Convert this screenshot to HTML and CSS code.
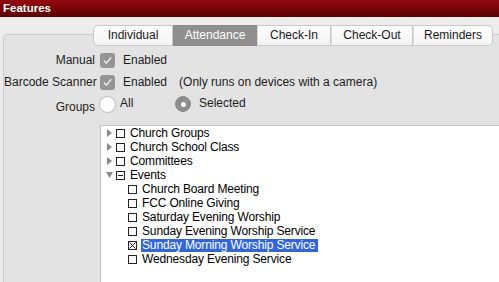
FILE: index.html
```html
<!DOCTYPE html>
<html>
<head>
<meta charset="utf-8">
<link rel="stylesheet" href="styles.css">
</head>
<body>
<div class="titlebar">Features</div>
<div class="main">
  <div class="tabs">
    <div class="tab w80">Individual</div>
    <div class="tab w84 on">Attendance</div>
    <div class="tab w74">Check-In</div>
    <div class="tab w82">Check-Out</div>
    <div class="tab w80">Reminders</div>
  </div>
  <div class="box">
    <div class="form">
      <div class="lbl">Manual</div>
      <div class="ctl">
        <span class="chk"><svg width="15" height="15" viewBox="0 0 15 15"><path d="M3.8 7.6 L6.3 10.3 L11.2 4.2" fill="none" stroke="#ececec" stroke-width="1.4"/></svg></span>Enabled
      </div>
      <div class="lbl">Barcode Scanner</div>
      <div class="ctl">
        <span class="chk"><svg width="15" height="15" viewBox="0 0 15 15"><path d="M3.8 7.6 L6.3 10.3 L11.2 4.2" fill="none" stroke="#ececec" stroke-width="1.4"/></svg></span>Enabled<span class="note">(Only runs on devices with a camera)</span>
      </div>
      <div class="lbl low">Groups</div>
      <div class="ctl radios">
        <div class="opt"><span class="radio"></span><span class="up">All</span></div>
        <div class="opt"><span class="radio on"><span class="dot"></span></span><span class="up sel">Selected</span></div>
      </div>
    </div>
    <div class="list">
      <div class="node"><svg class="tri" width="7" height="8" viewBox="0 0 7 8"><polygon points="1,0 6,4 1,8" fill="#8a8a8a"/></svg><span class="cb"></span><span class="txt">Church Groups</span></div>
      <div class="node"><svg class="tri" width="7" height="8" viewBox="0 0 7 8"><polygon points="1,0 6,4 1,8" fill="#8a8a8a"/></svg><span class="cb"></span><span class="txt">Church School Class</span></div>
      <div class="node"><svg class="tri" width="7" height="8" viewBox="0 0 7 8"><polygon points="1,0 6,4 1,8" fill="#8a8a8a"/></svg><span class="cb"></span><span class="txt">Committees</span></div>
      <div class="node"><svg class="tri" width="7" height="8" viewBox="0 0 7 8"><polygon points="0,1 7,1 3.5,7" fill="#8a8a8a"/></svg><span class="cb"><svg width="7" height="7" viewBox="0 0 7 7"><path d="M1 3.5 H6" stroke="#222" stroke-width="1"/></svg></span><span class="txt">Events</span></div>
      <div class="node child"><span class="cb"></span><span class="txt">Church Board Meeting</span></div>
      <div class="node child"><span class="cb"></span><span class="txt">FCC Online Giving</span></div>
      <div class="node child"><span class="cb"></span><span class="txt">Saturday Evening Worship</span></div>
      <div class="node child"><span class="cb"></span><span class="txt">Sunday Evening Worship Service</span></div>
      <div class="node child"><span class="cb"><svg width="7" height="7" viewBox="0 0 7 7"><path d="M0.5 0.5 L6.5 6.5 M6.5 0.5 L0.5 6.5" stroke="#222" stroke-width="1"/></svg></span><span class="txt hl">Sunday Morning Worship Service</span></div>
      <div class="node child"><span class="cb"></span><span class="txt">Wednesday Evening Service</span></div>
    </div>
  </div>
</div>
</body>
</html>
```

FILE: styles.css
```css
body {
    margin: 0;
    width: 499px;
    height: 282px;
    overflow: hidden;
    background: #ececec;
    font-family: "Liberation Sans", Arial, sans-serif;
    font-size: 12px;
    color: #1c1c1c;
}
.titlebar {
    height: 17px;
    line-height: 17px;
    padding-left: 3px;
    background: linear-gradient(#940b0f, #5a0003);
    color: #fff;
    font-weight: bold;
    font-size: 11.5px;
}
.main { padding: 8px 0 0 3px; }

/* segmented tabs */
.tabs {
    display: flex;
    margin-left: 90px;
    position: relative;
    z-index: 1;
    height: 21px;
}
.tab {
    box-sizing: border-box;
    height: 21px;
    line-height: 19px;
    text-align: center;
    background: linear-gradient(#ffffff, #f3f3f3);
    border: 1px solid #c8c8c8;
    border-left: 1px solid #dcdcdc;
    color: #1a1a1a;
}
.tab:first-child { border-left-color: #c8c8c8; border-radius: 5px 0 0 5px; }
.tab:last-child { border-radius: 0 5px 5px 0; }
.tab.on {
    background: #8f8f8f;
    border-color: #8c8c8c;
    color: #fff;
}
.w74 { width: 74px; }
.w80 { width: 80px; }
.w82 { width: 82px; }
.w84 { width: 84px; }

.box {
    margin-top: -12px;
    margin-right: -8px;
    height: 233px;
    padding-top: 14px;
    border: 1px solid #cdcdcd;
    border-bottom: none;
    border-radius: 5px 5px 0 0;
    background: #e3e3e3;
}

/* form rows */
.form {
    display: grid;
    grid-template-columns: 91px auto;
    column-gap: 5px;
}
.lbl {
    height: 22px;
    line-height: 22px;
    text-align: right;
    white-space: nowrap;
}
.lbl.low {
    box-sizing: border-box;
    padding-top: 6px;
    line-height: 16px;
}
.ctl {
    display: flex;
    align-items: center;
    height: 22px;
    white-space: nowrap;
}
.chk {
    width: 15px;
    height: 15px;
    border-radius: 3px;
    background: #959595;
    margin-right: 8px;
}
.chk svg { display: block; }
.note { margin-left: 12px; }

.radios { margin-left: -1px; }
.opt {
    display: flex;
    align-items: center;
    width: 76px;
}
.radio {
    box-sizing: border-box;
    width: 17px;
    height: 17px;
    border-radius: 50%;
    border: 1px solid #bcbcbc;
    background: #fff;
    margin-right: 4px;
}
.radio.on {
    width: 16px;
    height: 16px;
    background: #8e8e8e;
    border-color: #8a8a8a;
    display: flex;
    align-items: center;
    justify-content: center;
}
.dot {
    width: 5px;
    height: 5px;
    border-radius: 50%;
    background: #fff;
}
.up { padding-bottom: 3px; }
.sel { margin-left: 4px; }

/* tree list */
.list {
    margin: 10px 0 0 96px;
    height: 157px;
    background: #fff;
    border-top: 1px solid #c2c2c2;
    border-left: 1px solid #c2c2c2;
}
.node {
    display: flex;
    align-items: center;
    height: 14px;
    padding-left: 5px;
    color: #000;
    letter-spacing: -0.15px;
    white-space: nowrap;
}
.node.child { padding-left: 27px; }
.tri { margin-right: 3px; }
.cb {
    box-sizing: border-box;
    width: 9px;
    height: 9px;
    border: 1px solid #222;
    background: #fff;
    margin-right: 5px;
}
.cb svg { display: block; }
.txt { line-height: 13px; }
.hl {
    background: #3266d8;
    color: #fff;
    margin-left: -1px;
    padding: 0 3px 0 1px;
}
```
